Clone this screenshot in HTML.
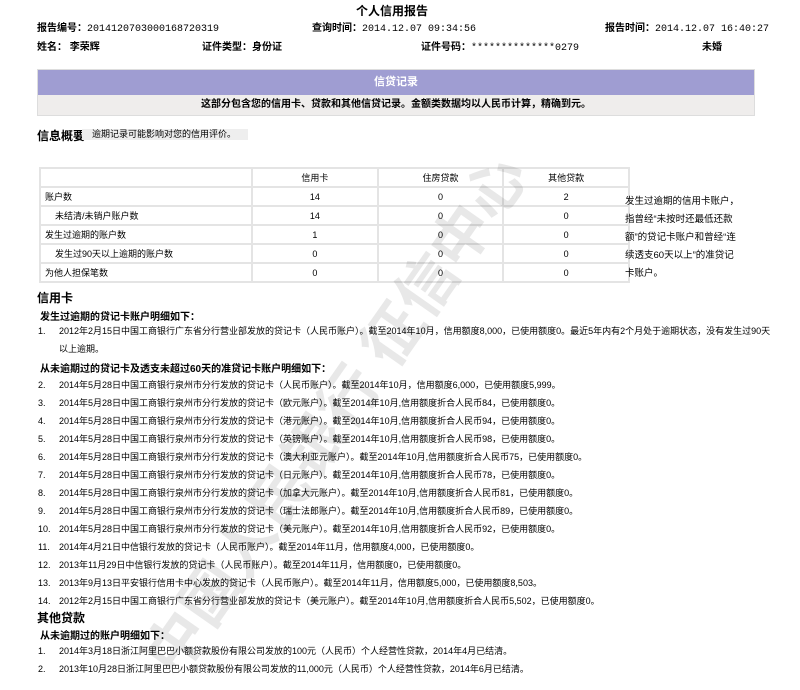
<!DOCTYPE html>
<html><head><meta charset="utf-8"><style>
body{margin:0;width:800px;height:679px;background:#fff;font-family:"Liberation Sans","Noto Sans CJK SC",sans-serif;color:#000;position:relative;overflow:hidden}
.a{position:absolute;white-space:nowrap}
.b{font-weight:bold}
.s{font-size:10px}
.m{font-size:10px;font-family:"Liberation Mono","Noto Sans CJK SC",monospace}
table{position:absolute;left:39px;top:167px;border-collapse:collapse;font-size:9px;table-layout:fixed;width:591px}
td{border:2px solid #e4e4e4;height:17px;padding:0 4px;text-align:center}
td:first-child{text-align:left}
td.i{padding-left:14px}
.li{position:absolute;left:38px;font-size:9px;white-space:nowrap}
.li span{display:inline-block;width:21px}
</style></head><body>
<div class="a b" style="left:356px;top:2px;font-size:12px">个人信用报告</div>
<div class="a b s" style="left:37px;top:19px">报告编号：<span class="m" style="font-weight:normal">2014120703000168720319</span></div>
<div class="a b s" style="left:312px;top:19px">查询时间：<span class="m" style="font-weight:normal">2014.12.07 09:34:56</span></div>
<div class="a b s" style="left:605px;top:19px">报告时间：<span class="m" style="font-weight:normal">2014.12.07 16:40:27</span></div>
<div class="a b s" style="left:37px;top:38px">姓名：&nbsp;李荣辉</div>
<div class="a b s" style="left:202px;top:38px">证件类型：身份证</div>
<div class="a b s" style="left:421px;top:38px">证件号码：<span class="m" style="font-weight:normal">**************0279</span></div>
<div class="a b s" style="left:702px;top:38px">未婚</div>
<div class="a" style="left:37px;top:69px;width:716px;height:25px;background:#9f9dd2;border:1px solid #ddd;color:#fff;font-size:11px;text-align:center;line-height:25px;font-weight:bold">信贷记录</div>
<div class="a b" style="left:37px;top:95px;width:716px;height:20px;background:#efedec;border:1px solid #ddd;border-top:0;font-size:10px;text-align:center;line-height:20px">这部分包含您的信用卡、贷款和其他信贷记录。金额类数据均以人民币计算，精确到元。</div>
<div class="a b" style="left:37px;top:127px;font-size:12px">信息概要</div>
<div class="a" style="left:82px;top:129px;width:156px;height:11px;background:#eee;font-size:9px;line-height:11px;padding-left:10px">逾期记录可能影响对您的信用评价。</div>
<table>
<tr><td style="width:202px"></td><td>信用卡</td><td>住房贷款</td><td>其他贷款</td></tr>
<tr><td>账户数</td><td>14</td><td>0</td><td>2</td></tr>
<tr><td class="i">未结清/未销户账户数</td><td>14</td><td>0</td><td>0</td></tr>
<tr><td>发生过逾期的账户数</td><td>1</td><td>0</td><td>0</td></tr>
<tr><td class="i">发生过90天以上逾期的账户数</td><td>0</td><td>0</td><td>0</td></tr>
<tr><td>为他人担保笔数</td><td>0</td><td>0</td><td>0</td></tr>
</table>
<div class="a" style="left:625px;top:193px;font-size:9.5px;line-height:18px;white-space:normal;width:116px">发生过逾期的信用卡账户，指曾经“未按时还最低还款额”的贷记卡账户和曾经“连续透支60天以上”的准贷记卡账户。</div>
<div class="a b" style="left:37px;top:289px;font-size:12px">信用卡</div>
<div class="a b s" style="left:40px;top:308px">发生过逾期的贷记卡账户明细如下：</div>
<div class="li" style="top:324px"><span>1.</span>2012年2月15日中国工商银行广东省分行营业部发放的贷记卡（人民币账户）。截至2014年10月，信用额度8,000，已使用额度0。最近5年内有2个月处于逾期状态，没有发生过90天</div>
<div class="li" style="top:342px"><span></span>以上逾期。</div>
<div class="a b s" style="left:40px;top:360px">从未逾期过的贷记卡及透支未超过60天的准贷记卡账户明细如下：</div>
<div class="li" style="top:378px"><span>2.</span>2014年5月28日中国工商银行泉州市分行发放的贷记卡（人民币账户）。截至2014年10月，信用额度6,000，已使用额度5,999。</div>
<div class="li" style="top:396px"><span>3.</span>2014年5月28日中国工商银行泉州市分行发放的贷记卡（欧元账户）。截至2014年10月,信用额度折合人民币84，已使用额度0。</div>
<div class="li" style="top:414px"><span>4.</span>2014年5月28日中国工商银行泉州市分行发放的贷记卡（港元账户）。截至2014年10月,信用额度折合人民币94，已使用额度0。</div>
<div class="li" style="top:432px"><span>5.</span>2014年5月28日中国工商银行泉州市分行发放的贷记卡（英镑账户）。截至2014年10月,信用额度折合人民币98，已使用额度0。</div>
<div class="li" style="top:450px"><span>6.</span>2014年5月28日中国工商银行泉州市分行发放的贷记卡（澳大利亚元账户）。截至2014年10月,信用额度折合人民币75，已使用额度0。</div>
<div class="li" style="top:468px"><span>7.</span>2014年5月28日中国工商银行泉州市分行发放的贷记卡（日元账户）。截至2014年10月,信用额度折合人民币78，已使用额度0。</div>
<div class="li" style="top:486px"><span>8.</span>2014年5月28日中国工商银行泉州市分行发放的贷记卡（加拿大元账户）。截至2014年10月,信用额度折合人民币81，已使用额度0。</div>
<div class="li" style="top:504px"><span>9.</span>2014年5月28日中国工商银行泉州市分行发放的贷记卡（瑞士法郎账户）。截至2014年10月,信用额度折合人民币89，已使用额度0。</div>
<div class="li" style="top:522px"><span>10.</span>2014年5月28日中国工商银行泉州市分行发放的贷记卡（美元账户）。截至2014年10月,信用额度折合人民币92，已使用额度0。</div>
<div class="li" style="top:540px"><span>11.</span>2014年4月21日中信银行发放的贷记卡（人民币账户）。截至2014年11月，信用额度4,000，已使用额度0。</div>
<div class="li" style="top:558px"><span>12.</span>2013年11月29日中信银行发放的贷记卡（人民币账户）。截至2014年11月，信用额度0，已使用额度0。</div>
<div class="li" style="top:576px"><span>13.</span>2013年9月13日平安银行信用卡中心发放的贷记卡（人民币账户）。截至2014年11月，信用额度5,000，已使用额度8,503。</div>
<div class="li" style="top:594px"><span>14.</span>2012年2月15日中国工商银行广东省分行营业部发放的贷记卡（美元账户）。截至2014年10月,信用额度折合人民币5,502，已使用额度0。</div>
<div class="a b" style="left:37px;top:609px;font-size:12px">其他贷款</div>
<div class="a b s" style="left:40px;top:627px">从未逾期过的账户明细如下：</div>
<div class="li" style="top:644px"><span>1.</span>2014年3月18日浙江阿里巴巴小额贷款股份有限公司发放的100元（人民币）个人经营性贷款，2014年4月已结清。</div>
<div class="li" style="top:662px"><span>2.</span>2013年10月28日浙江阿里巴巴小额贷款股份有限公司发放的11,000元（人民币）个人经营性贷款，2014年6月已结清。</div>
<div class="a b" style="font-size:60px;color:rgba(0,0,0,0.09);transform:rotate(-55deg);transform-origin:left top;left:120px;top:640px">中国人民银行 征信中心</div>
</body></html>
